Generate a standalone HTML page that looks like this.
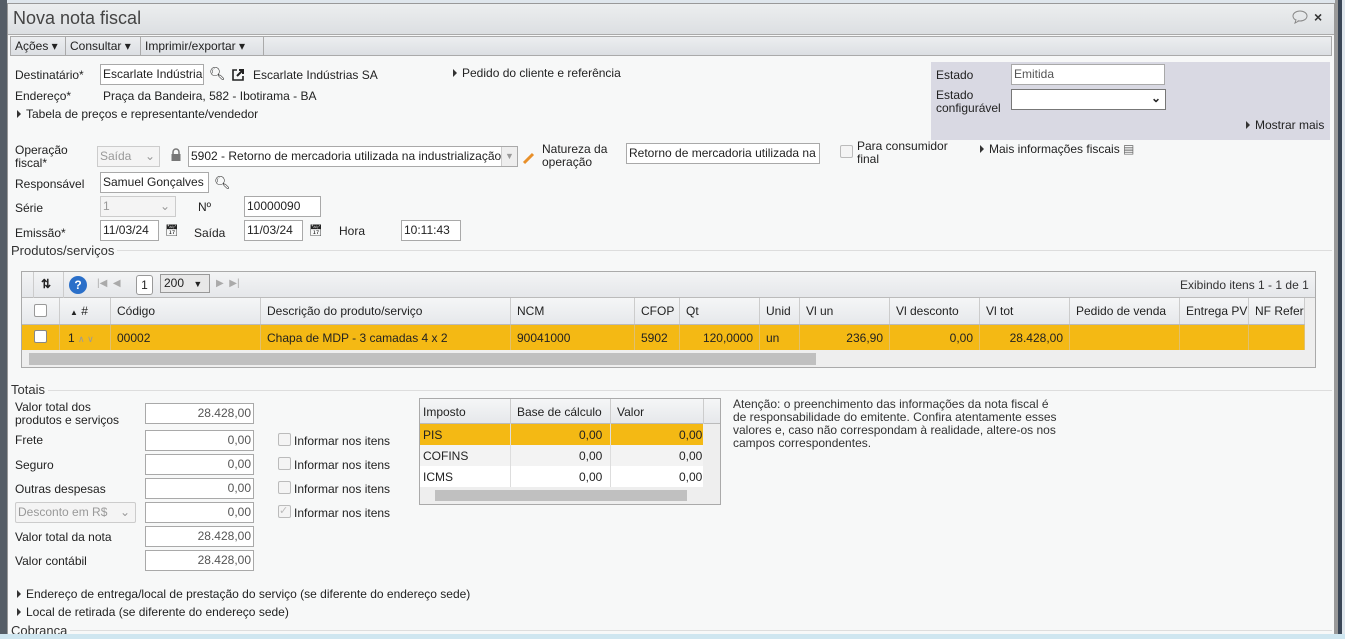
<!DOCTYPE html>
<html><head><meta charset="utf-8"><style>
*{box-sizing:border-box;margin:0;padding:0}
body{width:1345px;height:639px;overflow:hidden;background:#dfe6ec;font-family:"Liberation Sans",sans-serif;font-size:12px;color:#222;position:relative}
.a{position:absolute;white-space:nowrap}
.inp{position:absolute;background:#fff;border:1px solid #a9a9a9;height:21px;padding:2px 2px;font-size:12px;white-space:nowrap;overflow:hidden}
.r{text-align:right}
.dis{background:#f4f4f4;color:#999;border-color:#ccc}
.tri{display:inline-block;width:0;height:0;border-left:4px solid #333;border-top:4px solid transparent;border-bottom:4px solid transparent;margin-right:5px;vertical-align:0}
.cb{position:absolute;width:13px;height:13px;border:1px solid #bbb;background:#f4f4f4;border-radius:2px}
.g{position:absolute;border-right:1px solid #ccc;height:100%;top:0;padding:6px 6px;overflow:hidden;white-space:nowrap}
.sec{position:absolute;left:11px;right:13px;border-top:1px solid #ddd;height:0}
.sect{position:absolute;background:#f7f8f8;padding-right:3px;font-size:13px;color:#333}
</style></head><body>
<div class="a" style="left:0;top:0;width:7px;height:639px;background:#555d66"></div>
<div class="a" style="left:7px;top:3px;width:1328px;height:633px;background:#f7f8f8;border:1px solid #999"></div>
<div class="a" style="left:1335px;top:0;width:4px;height:636px;background:#999"></div>
<div class="a" style="left:1338px;top:0;width:4px;height:636px;background:#3a4656"></div>
<div class="a" style="left:0;top:634px;width:1345px;height:5px;background:#cfe6f0"></div>
<!-- title -->
<div class="a" style="left:8px;top:4px;width:1326px;height:31px;background:linear-gradient(#eceeef,#dcdfe2);border-bottom:1px solid #aaa"></div>
<div class="a" style="left:13px;top:8px;font-size:18px;color:#444">Nova nota fiscal</div>
<svg class="a" style="left:1292px;top:10px" width="16" height="14" viewBox="0 0 16 14"><ellipse cx="8" cy="6" rx="7" ry="5" fill="none" stroke="#888"/><path d="M4 10 L3 13 L7 10.8" fill="#fff" stroke="#888"/></svg>
<div class="a" style="left:1314px;top:9px;font-size:14px;font-weight:bold;color:#333">×</div>
<!-- toolbar -->
<div class="a" style="left:10px;top:36px;width:1322px;height:20px;background:linear-gradient(#eceef0,#dcdfe3);border:1px solid #aaa"></div>
<div class="a" style="left:15px;top:39px">Ações ▾</div>
<div class="a" style="left:65px;top:36px;height:20px;border-left:1px solid #aaa"></div>
<div class="a" style="left:70px;top:39px">Consultar ▾</div>
<div class="a" style="left:140px;top:36px;height:20px;border-left:1px solid #aaa"></div>
<div class="a" style="left:145px;top:39px">Imprimir/exportar ▾</div>
<div class="a" style="left:263px;top:36px;height:20px;border-left:1px solid #aaa"></div>
<!-- estado panel -->
<div class="a" style="left:931px;top:62px;width:399px;height:78px;background:#d9d9e3"></div>
<div class="a" style="left:936px;top:68px">Estado</div>
<div class="inp" style="left:1011px;top:64px;width:154px;color:#555">Emitida</div>
<div class="a" style="left:936px;top:89px;line-height:13px">Estado<br>configurável</div>
<div class="inp" style="left:1011px;top:89px;width:155px;border-color:#777"><span style="position:absolute;right:4px;top:1px;font-weight:bold">⌄</span></div>
<div class="a" style="left:1246px;top:118px"><span class="tri"></span>Mostrar mais</div>
<!-- form -->
<div class="a" style="left:15px;top:68px">Destinatário*</div>
<div class="inp" style="left:100px;top:64px;width:104px">Escarlate Indústria</div>
<div class="a" style="left:209px;top:66px;font-size:13px">&#x1F50D;&#xFE0E;</div>
<svg class="a" style="left:231px;top:68px" width="14" height="14" viewBox="0 0 14 14"><path d="M6 2H2V12H12V8" fill="none" stroke="#222" stroke-width="1.6"/><path d="M6 8L12 2M8 2H12V6" fill="none" stroke="#222" stroke-width="2"/></svg>
<div class="a" style="left:253px;top:68px">Escarlate Indústrias SA</div>
<div class="a" style="left:453px;top:66px"><span class="tri"></span>Pedido do cliente e referência</div>
<div class="a" style="left:15px;top:89px">Endereço*</div>
<div class="a" style="left:103px;top:89px">Praça da Bandeira, 582 - Ibotirama - BA</div>
<div class="a" style="left:17px;top:107px"><span class="tri"></span>Tabela de preços e representante/vendedor</div>
<div class="a" style="left:15px;top:144px;line-height:13px">Operação<br>fiscal*</div>
<div class="inp dis" style="left:97px;top:146px;width:63px">Saída <span style="position:absolute;right:4px">⌄</span></div>
<svg class="a" style="left:170px;top:148px" width="12" height="14" viewBox="0 0 12 14"><path d="M3 6V4a3 3 0 0 1 6 0v2" fill="none" stroke="#777" stroke-width="1.5"/><rect x="1.5" y="6" width="9" height="7" fill="#777"/></svg>
<div class="inp" style="left:188px;top:146px;width:330px;padding-right:20px">5902 - Retorno de mercadoria utilizada na industrialização<span style="position:absolute;right:0;top:0;width:16px;height:19px;background:#eee;border-left:1px solid #ccc;color:#999;font-size:9px;text-align:center;line-height:19px">▼</span></div>
<svg class="a" style="left:522px;top:151px" width="14" height="14" viewBox="0 0 14 14"><path d="M2 12L11 3" stroke="#e8902a" stroke-width="3"/></svg>
<div class="a" style="left:542px;top:143px;line-height:13px">Natureza da<br>operação</div>
<div class="inp" style="left:626px;top:143px;width:194px">Retorno de mercadoria utilizada na</div>
<div class="cb" style="left:840px;top:145px"></div>
<div class="a" style="left:857px;top:140px;line-height:13px">Para consumidor<br>final</div>
<div class="a" style="left:980px;top:142px"><span class="tri"></span>Mais informações fiscais <span style="color:#666">&#9636;</span></div>
<div class="a" style="left:15px;top:177px">Responsável</div>
<div class="inp" style="left:100px;top:172px;width:109px">Samuel Gonçalves</div>
<div class="a" style="left:214px;top:175px;font-size:13px">&#x1F50D;&#xFE0E;</div>
<div class="a" style="left:15px;top:201px">Série</div>
<div class="inp dis" style="left:100px;top:196px;width:76px">1<span style="position:absolute;right:5px">⌄</span></div>
<div class="a" style="left:198px;top:200px">Nº</div>
<div class="inp" style="left:244px;top:196px;width:77px">10000090</div>
<div class="a" style="left:15px;top:226px">Emissão*</div>
<div class="inp" style="left:100px;top:220px;width:59px">11/03/24</div>
<div class="a" style="left:165px;top:224px;font-size:11px">&#128197;&#xFE0E;</div>
<div class="a" style="left:194px;top:226px">Saída</div>
<div class="inp" style="left:244px;top:220px;width:59px">11/03/24</div>
<div class="a" style="left:309px;top:224px;font-size:11px">&#128197;&#xFE0E;</div>
<div class="a" style="left:339px;top:224px">Hora</div>
<div class="inp" style="left:401px;top:220px;width:60px">10:11:43</div>
<!-- produtos -->
<div class="sec" style="top:250px"></div>
<div class="sect" style="left:11px;top:243px">Produtos/serviços</div>
<div class="a" style="left:21px;top:271px;width:1295px;height:97px;border:1px solid #aaa;background:#fff"></div>
<div class="a" style="left:22px;top:272px;width:1293px;height:26px;background:linear-gradient(#f3f4f5,#e5e7ea);border-bottom:1px solid #bbb"></div>
<div class="a" style="left:33px;top:272px;height:26px;border-left:1px solid #ccc"></div>
<div class="a" style="left:41px;top:277px;font-weight:bold">⇅</div>
<div class="a" style="left:63px;top:272px;height:26px;border-left:1px solid #ccc"></div>
<div class="a" style="left:69px;top:276px;width:18px;height:18px;border-radius:9px;background:#2a6fc9;color:#fff;font-weight:bold;text-align:center;line-height:18px">?</div>
<div class="a" style="left:97px;top:278px;color:#aaa;font-size:10px">|◀ &nbsp;◀</div>
<div class="a" style="left:136px;top:275px;width:17px;height:20px;border:1px solid #999;border-radius:3px;background:#fff;text-align:center;line-height:18px">1</div>
<div class="a" style="left:160px;top:274px;width:50px;height:19px;border:1px solid #999;background:#e8e8e8;padding:1px 3px">200 <span style="font-size:9px;margin-left:6px">▼</span></div>
<div class="a" style="left:216px;top:278px;color:#aaa;font-size:10px">▶ &nbsp;▶|</div>
<div class="a" style="left:1180px;top:278px;color:#333">Exibindo itens 1 - 1 de 1</div>
<div class="a" style="left:22px;top:298px;width:1283px;height:27px;background:linear-gradient(#f5f6f7,#e6e8eb);border-bottom:1px solid #bbb">
<div class="g" style="left:0;width:38px"><div class="cb" style="left:12px;top:6px;background:#fff;border-color:#999"></div></div>
<div class="g" style="left:38px;width:51px;padding-left:10px"><span style="font-size:8px">▲</span> #</div>
<div class="g" style="left:89px;width:150px">Código</div>
<div class="g" style="left:239px;width:250px">Descrição do produto/serviço</div>
<div class="g" style="left:489px;width:124px">NCM</div>
<div class="g" style="left:613px;width:45px">CFOP</div>
<div class="g" style="left:658px;width:80px">Qt</div>
<div class="g" style="left:738px;width:40px">Unid</div>
<div class="g" style="left:778px;width:90px">Vl un</div>
<div class="g" style="left:868px;width:90px">Vl desconto</div>
<div class="g" style="left:958px;width:90px">Vl tot</div>
<div class="g" style="left:1048px;width:110px">Pedido de venda</div>
<div class="g" style="left:1158px;width:69px">Entrega PV</div>
<div class="g" style="left:1227px;width:56px">NF Refer</div>
</div>
<div class="a" style="left:22px;top:325px;width:1283px;height:25px;background:#f4b914">
<div class="g" style="left:0;width:38px;border-color:#e0c070"><div class="cb" style="left:12px;top:5px;background:#fff;border-color:#888"></div></div>
<div class="g" style="left:38px;width:51px;padding-left:8px;border-color:#e0c070">1 <span style="color:#999;font-size:9px">∧ ∨</span></div>
<div class="g" style="left:89px;width:150px;border-color:#e0c070">00002</div>
<div class="g" style="left:239px;width:250px;border-color:#e0c070">Chapa de MDP - 3 camadas 4 x 2</div>
<div class="g" style="left:489px;width:124px;border-color:#e0c070">90041000</div>
<div class="g" style="left:613px;width:45px;border-color:#e0c070">5902</div>
<div class="g r" style="left:658px;width:80px;border-color:#e0c070">120,0000</div>
<div class="g" style="left:738px;width:40px;border-color:#e0c070">un</div>
<div class="g r" style="left:778px;width:90px;border-color:#e0c070">236,90</div>
<div class="g r" style="left:868px;width:90px;border-color:#e0c070">0,00</div>
<div class="g r" style="left:958px;width:90px;border-color:#e0c070">28.428,00</div>
<div class="g" style="left:1048px;width:110px;border-color:#e0c070"></div>
<div class="g" style="left:1158px;width:69px;border-color:#e0c070"></div>
<div class="g" style="left:1227px;width:56px;border-color:#e0c070"></div>
</div>
<div class="a" style="left:1305px;top:298px;width:10px;height:69px;background:#eee"></div>
<div class="a" style="left:22px;top:350px;width:1283px;height:17px;background:#eee"></div>
<div class="a" style="left:29px;top:353px;width:787px;height:12px;background:#c0c0c0"></div>
<!-- totais -->
<div class="sec" style="top:390px"></div>
<div class="sect" style="left:11px;top:382px">Totais</div>
<div class="a" style="left:15px;top:401px;line-height:13px">Valor total dos<br>produtos e serviços</div>
<div class="inp r" style="left:145px;top:403px;width:109px;color:#555">28.428,00</div>
<div class="a" style="left:15px;top:433px">Frete</div>
<div class="inp r" style="left:145px;top:430px;width:109px;color:#555">0,00</div>
<div class="a" style="left:15px;top:458px">Seguro</div>
<div class="inp r" style="left:145px;top:454px;width:109px;color:#555">0,00</div>
<div class="a" style="left:15px;top:482px">Outras despesas</div>
<div class="inp r" style="left:145px;top:478px;width:109px;color:#555">0,00</div>
<div class="inp dis" style="left:15px;top:502px;width:121px;border-radius:2px">Desconto em R$ <span style="position:absolute;right:5px">⌄</span></div>
<div class="inp r" style="left:145px;top:502px;width:109px;color:#555">0,00</div>
<div class="a" style="left:15px;top:530px">Valor total da nota</div>
<div class="inp r" style="left:145px;top:526px;width:109px;color:#555">28.428,00</div>
<div class="a" style="left:15px;top:554px">Valor contábil</div>
<div class="inp r" style="left:145px;top:550px;width:109px;color:#555">28.428,00</div>
<div class="cb" style="left:278px;top:433px"></div><div class="a" style="left:294px;top:434px">Informar nos itens</div>
<div class="cb" style="left:278px;top:457px"></div><div class="a" style="left:294px;top:458px">Informar nos itens</div>
<div class="cb" style="left:278px;top:481px"></div><div class="a" style="left:294px;top:482px">Informar nos itens</div>
<div class="cb" style="left:278px;top:505px;color:#bbb;font-size:11px;line-height:11px">✓</div><div class="a" style="left:294px;top:506px">Informar nos itens</div>
<!-- imposto grid -->
<div class="a" style="left:419px;top:398px;width:302px;height:107px;border:1px solid #aaa;background:#eee"></div>
<div class="a" style="left:420px;top:399px;width:300px;height:25px;background:linear-gradient(#f5f6f7,#e6e8eb);border-bottom:1px solid #bbb"></div>
<div class="a" style="left:423px;top:405px">Imposto</div>
<div class="a" style="left:510px;top:399px;height:88px;border-left:1px solid #ccc"></div>
<div class="a" style="left:517px;top:405px">Base de cálculo</div>
<div class="a" style="left:610px;top:399px;height:88px;border-left:1px solid #ccc"></div>
<div class="a" style="left:617px;top:405px">Valor</div>
<div class="a" style="left:703px;top:399px;height:25px;border-left:1px solid #ccc"></div>
<div class="a" style="left:420px;top:424px;width:283px;height:21px;background:#f4b914"></div>
<div class="a" style="left:420px;top:445px;width:283px;height:21px;background:#f3f3f3"></div>
<div class="a" style="left:420px;top:466px;width:283px;height:21px;background:#fff"></div>
<div class="a" style="left:510px;top:424px;height:63px;border-left:1px solid #ddd"></div>
<div class="a" style="left:610px;top:424px;height:63px;border-left:1px solid #ddd"></div>
<div class="a" style="left:423px;top:428px">PIS</div><div class="a" style="left:579px;top:428px">0,00</div><div class="a" style="left:679px;top:428px">0,00</div>
<div class="a" style="left:423px;top:449px">COFINS</div><div class="a" style="left:579px;top:449px">0,00</div><div class="a" style="left:679px;top:449px">0,00</div>
<div class="a" style="left:423px;top:470px">ICMS</div><div class="a" style="left:579px;top:470px">0,00</div><div class="a" style="left:679px;top:470px">0,00</div>
<div class="a" style="left:435px;top:490px;width:252px;height:11px;background:#c0c0c0"></div>
<div class="a" style="left:733px;top:398px;line-height:13px;color:#333">Atenção: o preenchimento das informações da nota fiscal é<br>de responsabilidade do emitente. Confira atentamente esses<br>valores e, caso não correspondam à realidade, altere-os nos<br>campos correspondentes.</div>
<div class="a" style="left:17px;top:587px"><span class="tri"></span>Endereço de entrega/local de prestação do serviço (se diferente do endereço sede)</div>
<div class="a" style="left:17px;top:605px"><span class="tri"></span>Local de retirada (se diferente do endereço sede)</div>
<div class="sec" style="top:630px"></div>
<div class="sect" style="left:11px;top:623px">Cobranca</div>
<div class="a" style="left:0;top:634px;width:1345px;height:5px;background:#cfe6f0"></div>
</body></html>
